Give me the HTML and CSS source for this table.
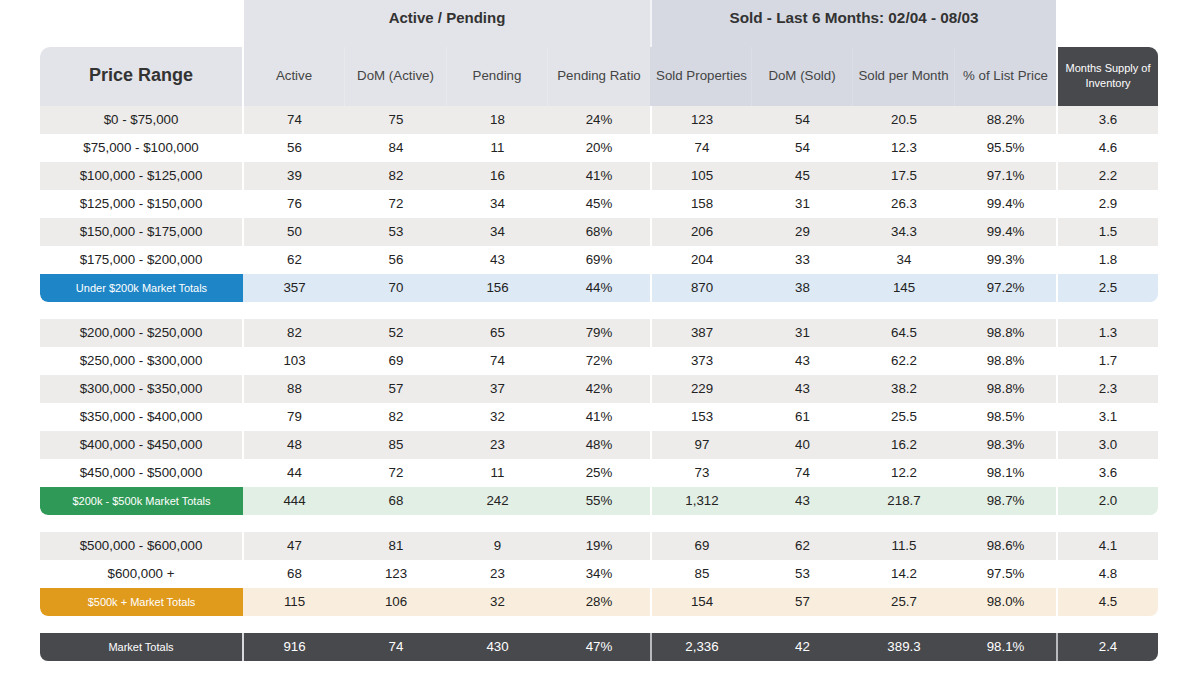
FILE: index.html
```html
<!DOCTYPE html>
<html lang="en">
<head>
<meta charset="utf-8">
<title>Market Report</title>
<link rel="stylesheet" href="styles.css">
</head>
<body>
<div class="report">
  <div class="row group-head">
    <div class="cell blank"></div>
    <div class="cell grp grp-active">Active / Pending</div>
    <div class="cell grp grp-sold">Sold - Last 6 Months: 02/04 - 08/03</div>
    <div class="cell blank"></div>
  </div>
  <div class="row sub-head">
    <div class="cell c0 price-head">Price Range</div>
    <div class="cell c1 sh-a">Active</div>
    <div class="cell c2 sh-a">DoM (Active)</div>
    <div class="cell c3 sh-a">Pending</div>
    <div class="cell c4 sh-a sh-last">Pending Ratio</div>
    <div class="cell c5 sh-s">Sold Properties</div>
    <div class="cell c6 sh-s">DoM (Sold)</div>
    <div class="cell c7 sh-s">Sold per Month</div>
    <div class="cell c8 sh-s sh-end">% of List Price</div>
    <div class="cell c9 msi-head">Months Supply of<br>Inventory</div>
  </div>

  <div class="group">
    <div class="row alt"><div class="cell c0">$0 - $75,000</div><div class="cell">74</div><div class="cell">75</div><div class="cell">18</div><div class="cell c4">24%</div><div class="cell">123</div><div class="cell">54</div><div class="cell">20.5</div><div class="cell c8">88.2%</div><div class="cell">3.6</div></div>
    <div class="row"><div class="cell c0">$75,000 - $100,000</div><div class="cell">56</div><div class="cell">84</div><div class="cell">11</div><div class="cell c4">20%</div><div class="cell">74</div><div class="cell">54</div><div class="cell">12.3</div><div class="cell c8">95.5%</div><div class="cell">4.6</div></div>
    <div class="row alt"><div class="cell c0">$100,000 - $125,000</div><div class="cell">39</div><div class="cell">82</div><div class="cell">16</div><div class="cell c4">41%</div><div class="cell">105</div><div class="cell">45</div><div class="cell">17.5</div><div class="cell c8">97.1%</div><div class="cell">2.2</div></div>
    <div class="row"><div class="cell c0">$125,000 - $150,000</div><div class="cell">76</div><div class="cell">72</div><div class="cell">34</div><div class="cell c4">45%</div><div class="cell">158</div><div class="cell">31</div><div class="cell">26.3</div><div class="cell c8">99.4%</div><div class="cell">2.9</div></div>
    <div class="row alt"><div class="cell c0">$150,000 - $175,000</div><div class="cell">50</div><div class="cell">53</div><div class="cell">34</div><div class="cell c4">68%</div><div class="cell">206</div><div class="cell">29</div><div class="cell">34.3</div><div class="cell c8">99.4%</div><div class="cell">1.5</div></div>
    <div class="row"><div class="cell c0">$175,000 - $200,000</div><div class="cell">62</div><div class="cell">56</div><div class="cell">43</div><div class="cell c4">69%</div><div class="cell">204</div><div class="cell">33</div><div class="cell">34</div><div class="cell c8">99.3%</div><div class="cell">1.8</div></div>
    <div class="row total total-blue"><div class="cell c0 label">Under $200k Market Totals</div><div class="cell">357</div><div class="cell">70</div><div class="cell">156</div><div class="cell c4">44%</div><div class="cell">870</div><div class="cell">38</div><div class="cell">145</div><div class="cell c8">97.2%</div><div class="cell c9">2.5</div></div>
  </div>

  <div class="group">
    <div class="row alt"><div class="cell c0">$200,000 - $250,000</div><div class="cell">82</div><div class="cell">52</div><div class="cell">65</div><div class="cell c4">79%</div><div class="cell">387</div><div class="cell">31</div><div class="cell">64.5</div><div class="cell c8">98.8%</div><div class="cell">1.3</div></div>
    <div class="row"><div class="cell c0">$250,000 - $300,000</div><div class="cell">103</div><div class="cell">69</div><div class="cell">74</div><div class="cell c4">72%</div><div class="cell">373</div><div class="cell">43</div><div class="cell">62.2</div><div class="cell c8">98.8%</div><div class="cell">1.7</div></div>
    <div class="row alt"><div class="cell c0">$300,000 - $350,000</div><div class="cell">88</div><div class="cell">57</div><div class="cell">37</div><div class="cell c4">42%</div><div class="cell">229</div><div class="cell">43</div><div class="cell">38.2</div><div class="cell c8">98.8%</div><div class="cell">2.3</div></div>
    <div class="row"><div class="cell c0">$350,000 - $400,000</div><div class="cell">79</div><div class="cell">82</div><div class="cell">32</div><div class="cell c4">41%</div><div class="cell">153</div><div class="cell">61</div><div class="cell">25.5</div><div class="cell c8">98.5%</div><div class="cell">3.1</div></div>
    <div class="row alt"><div class="cell c0">$400,000 - $450,000</div><div class="cell">48</div><div class="cell">85</div><div class="cell">23</div><div class="cell c4">48%</div><div class="cell">97</div><div class="cell">40</div><div class="cell">16.2</div><div class="cell c8">98.3%</div><div class="cell">3.0</div></div>
    <div class="row"><div class="cell c0">$450,000 - $500,000</div><div class="cell">44</div><div class="cell">72</div><div class="cell">11</div><div class="cell c4">25%</div><div class="cell">73</div><div class="cell">74</div><div class="cell">12.2</div><div class="cell c8">98.1%</div><div class="cell">3.6</div></div>
    <div class="row total total-green"><div class="cell c0 label">$200k - $500k Market Totals</div><div class="cell">444</div><div class="cell">68</div><div class="cell">242</div><div class="cell c4">55%</div><div class="cell">1,312</div><div class="cell">43</div><div class="cell">218.7</div><div class="cell c8">98.7%</div><div class="cell c9">2.0</div></div>
  </div>

  <div class="group">
    <div class="row alt"><div class="cell c0">$500,000 - $600,000</div><div class="cell">47</div><div class="cell">81</div><div class="cell">9</div><div class="cell c4">19%</div><div class="cell">69</div><div class="cell">62</div><div class="cell">11.5</div><div class="cell c8">98.6%</div><div class="cell">4.1</div></div>
    <div class="row"><div class="cell c0">$600,000 +</div><div class="cell">68</div><div class="cell">123</div><div class="cell">23</div><div class="cell c4">34%</div><div class="cell">85</div><div class="cell">53</div><div class="cell">14.2</div><div class="cell c8">97.5%</div><div class="cell">4.8</div></div>
    <div class="row total total-orange"><div class="cell c0 label">$500k + Market Totals</div><div class="cell">115</div><div class="cell">106</div><div class="cell">32</div><div class="cell c4">28%</div><div class="cell">154</div><div class="cell">57</div><div class="cell">25.7</div><div class="cell c8">98.0%</div><div class="cell c9">4.5</div></div>
  </div>

  <div class="group">
    <div class="row grand"><div class="cell c0 label">Market Totals</div><div class="cell">916</div><div class="cell">74</div><div class="cell">430</div><div class="cell c4">47%</div><div class="cell">2,336</div><div class="cell">42</div><div class="cell">389.3</div><div class="cell c8">98.1%</div><div class="cell c9">2.4</div></div>
  </div>
</div>
</body>
</html>
```

FILE: styles.css
```css
* { box-sizing: border-box; }

html, body {
  margin: 0;
  padding: 0;
  background: #ffffff;
}

body {
  font-family: "Liberation Sans", Arial, sans-serif;
  color: #222222;
}

.report {
  margin-left: 40px;
  width: 1118px;
}

.row {
  display: grid;
  grid-template-columns: 204px 101px 102px 101px 104px 100px 101px 102px 103px 100px;
  height: 28px;
  font-size: 13.3px;
}

.cell {
  display: flex;
  align-items: center;
  justify-content: center;
  text-align: center;
  white-space: nowrap;
  padding-bottom: 1px;
}

.c0, .c4, .c8 { border-right: 2px solid #ffffff; }

.row.alt { background: #edeceb; }

.group { margin-bottom: 17px; }

/* header rows */
.group-head {
  height: 47px;
  grid-template-columns: 204px 408px 406px 100px;
}
.grp {
  align-items: flex-start;
  padding-top: 9px;
  font-size: 15px;
  font-weight: bold;
  color: #333333;
}
.grp-active {
  background: #e3e4e9;
  border-right: 2px solid #f2f3f6;
}
.grp-sold {
  background: #d6d9e2;
  border-right: 2px solid #ffffff;
  font-size: 15.3px;
}

.sub-head {
  height: 59px;
  color: #444444;
}
.sub-head .cell { padding-bottom: 2px; }
.price-head {
  background: #e3e4e9;
  border-top-left-radius: 10px;
  font-size: 18px;
  font-weight: bold;
  color: #333333;
}
.sh-a { background: #e3e4e9; border-right: 1px solid #e8e9ed; }
.sh-s { background: #d6d9e2; border-right: 1px solid #dbdee6; }
.sub-head .sh-last { border-right: 2px solid #d6d9e2; }
.sub-head .sh-end { border-right: 2px solid #ffffff; }
.msi-head {
  background: #48494d;
  color: #ffffff;
  font-size: 11px;
  line-height: 15px;
  border-top-right-radius: 9px;
}

/* totals */
.total .label {
  color: #ffffff;
  font-size: 11px;
  border-bottom-left-radius: 8px;
  border-right: 1px solid transparent;
  background-clip: padding-box;
}
.total .c9 { border-bottom-right-radius: 8px; }
.total { border-radius: 0 0 8px 8px; }

.total-blue { background: #dde9f5; }
.total-blue .label { background-color: #1e86c6; }

.total-green { background: #e2efe5; }
.total-green .label { background-color: #2f9a57; }

.total-orange { background: #f9eedd; }
.total-orange .label { background-color: #e09b1d; }

.grand {
  background: #48494d;
  color: #ffffff;
  border-radius: 0 0 8px 8px;
}
.grand .label { font-size: 11px; }
.grand .c0 { border-right: 2px solid #d9d9db; }
.grand .c4, .grand .c8 { border-right: 2px solid #b9babd; }
```
